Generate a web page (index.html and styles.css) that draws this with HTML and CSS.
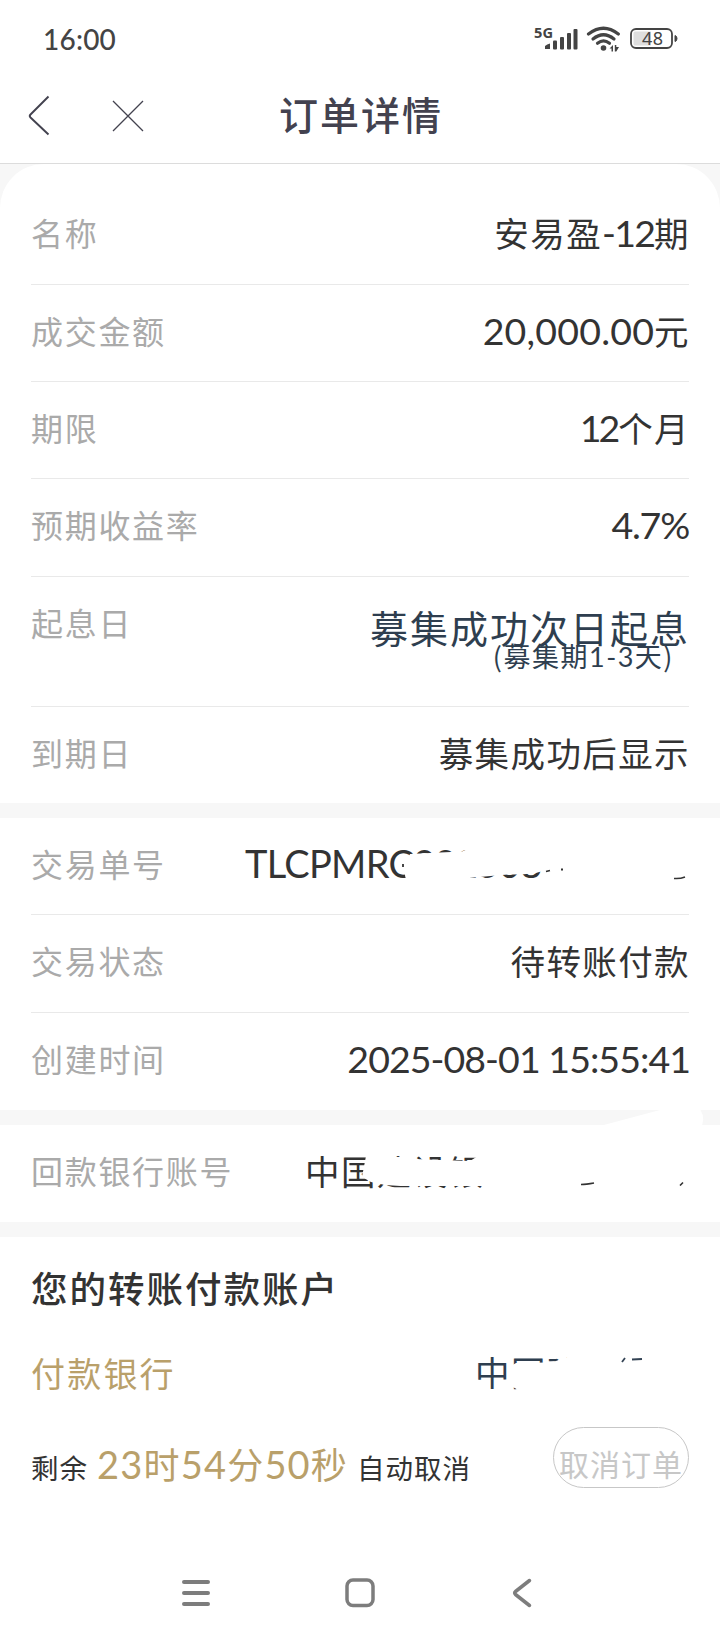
FILE: index.html
```html
<!DOCTYPE html>
<html lang="zh-CN">
<head>
<meta charset="utf-8">
<title>订单详情</title>
<link rel="stylesheet" href="styles.css">
</head>
<body>
<header class="top">
  <div class="status">
    <span class="clock">16:00</span>
    <svg class="status-icons" width="150" height="34" viewBox="530 22 150 34">
      <text class="net" x="534" y="37.5" textLength="19" lengthAdjust="spacingAndGlyphs">5G</text>
      <g fill="#444">
        <path d="M545 49V46Q547 44 550 43.500V49Z"/>
        <rect x="553" y="40.500" width="4" height="9" rx="1"/>
        <rect x="560" y="37" width="4" height="12.500" rx="1"/>
        <rect x="567" y="33" width="4" height="16.500" rx="1"/>
        <rect x="573.500" y="29" width="4" height="20.500" rx="1"/>
      </g>
      <g fill="none" stroke="#444" stroke-width="3.200" stroke-linecap="round">
        <path d="M588.500 34Q603.500 22.500 618.300 34"/>
        <path d="M593 39Q603.500 30.500 614 39"/>
        <path d="M597.500 43.300Q603.500 38.500 609.500 43.300"/>
      </g>
      <circle cx="603.500" cy="48" r="2.800" fill="#444"/>
      <path d="M609.500 48.500L613 45V51.500H611.500V48.500ZM614.800 45H616.300V47H619L616.300 51.500H614.800Z" fill="#444"/>
      <rect x="631" y="29" width="41" height="19" rx="5" fill="#fff" stroke="#444" stroke-width="1.800"/>
      <path d="M635 31.500H651V45.500H635Q633.500 45.500 633.500 44V33Q633.500 31.500 635 31.500Z" fill="#dedede"/>
      <text class="charge" x="642" y="45" textLength="21">48</text>
      <path d="M675 35.500Q677 36 677 38.500T675 41.500Z" fill="#444" stroke="#444"/>
    </svg>
  </div>
  <div class="nav">
    <svg class="nav-icons" width="150" height="50" viewBox="0 91 150 50" fill="none" stroke="#43424f">
      <path d="M48.500 96.500L30.500 114.500Q29 116 30.500 117.500L48.500 134.500" stroke-width="1.900"/>
      <path d="M113 101L143 131M143 101L113 131" stroke-width="1.300"/>
    </svg>
    <h1 class="title">订单详情</h1>
  </div>
</header>
<main class="sheet">
  <section class="group first">
    <div class="row r1"><span class="label">名称</span><span class="value">安易盈<b class="num tight">-12</b>期</span></div>
    <div class="row"><span class="label">成交金额</span><span class="value"><b class="num">20,000.00</b>元</span></div>
    <div class="row"><span class="label">期限</span><span class="value"><b class="num term">12</b>个月</span></div>
    <div class="row rate"><span class="label">预期收益率</span><span class="value"><b class="num pct">4.7%</b></span></div>
    <div class="row tall"><span class="label">起息日</span><span class="stack"><span class="start">募集成功次日起息</span><span class="note">(募集期<b class="note-num">1-3</b>天)</span></span></div>
    <div class="row last"><span class="label">到期日</span><span class="value">募集成功后显示</span></div>
  </section>
  <section class="group trade">
    <div class="row"><span class="label">交易单号</span><span class="value code">TLCPMRC202508</span>
      <svg class="cover" width="475" height="60" viewBox="235 836 475 60">
        <path d="M410 854L440 852.500L462 851.500L470 848H560V868Q545 870 536 873Q520 875 508 874.500Q490 876 474 877.500L455 879.500V883H408Q402 873 406 863Z" fill="#fff"/>
        <path d="M674 878.500Q680 879 685 877" fill="none" stroke="#333" stroke-width="1.500"/>
        <path d="M403 864V867M546 871.500L550 870.500M561 869.500H563" stroke="#333" stroke-width="1.800"/>
      </svg>
    </div>
    <div class="row"><span class="label">交易状态</span><span class="value">待转账付款</span></div>
    <div class="row"><span class="label">创建时间</span><span class="value"><b class="num date">2025-08-01 15:55:41</b></span></div>
  </section>
  <section class="group refund">
    <div class="row"><span class="label">回款银行账号</span><span class="value bank">中国建设银</span>
      <svg class="cover" width="475" height="80" viewBox="235 1106 475 80">
        <path d="M600 1126L675 1106H697Q706 1114 702 1126Z" fill="#fff"/>
        <path d="M366 1156L377 1156.500L400 1157L415 1159L440 1160L470 1161L478 1156H496V1192H445V1188L408 1186.500L385 1185L371 1182L362 1177Z" fill="#fff"/>
        <path d="M581 1184.500Q586 1184.500 594 1183M680 1185.500L683 1182.500" fill="none" stroke="#333" stroke-width="1.600"/>
      </svg>
    </div>
  </section>
  <section class="group pay">
    <h2 class="heading">您的转账付款账户</h2>
    <div class="pay-bank"><span class="gold">付款银行</span><span class="payer">中国建</span>
      <svg class="cover pay-cover" width="240" height="60" viewBox="470 1345 240 60">
        <path d="M516 1363L548 1362.500L556 1361L570 1356H610V1397H516.500V1389L511 1386V1366Z" fill="#fff"/>
        <path d="M622 1362L625 1358M632 1359.500L642 1359" stroke="#334354" stroke-width="1.800"/>
      </svg>
    </div>
    <div class="countdown">
      <span class="small">剩余</span>
      <span class="timer"><b>23</b>时<b>54</b>分<b>50</b>秒</span>
      <span class="small auto">自动取消</span>
      <button class="cancel">取消订单</button>
    </div>
  </section>
</main>
<footer class="system">
  <svg width="400" height="50" viewBox="160 1570 400 50" fill="none" stroke="#7d7d7d" stroke-width="4" stroke-linecap="round" stroke-linejoin="round">
    <path d="M184 1582H208M184 1593H208M184 1604H208"/>
    <rect x="347" y="1580" width="26" height="25.500" rx="6" stroke-width="3.500"/>
    <path d="M529.500 1580.500L515.500 1591.500Q514 1593 515.500 1594.500L529.500 1605.500" stroke-width="3.500"/>
  </svg>
</footer>
</body>
</html>
```

FILE: styles.css
```css
* { box-sizing: border-box; }
body {
  margin: 0;
  width: 720px;
  height: 1640px;
  display: flex;
  flex-direction: column;
  overflow: hidden;
  background: #fff;
  color: #333;
  font-family: "Noto Sans CJK SC", sans-serif;
}
b { font-weight: 400; }
.top { height: 164px; border-bottom: 1px solid #dcdcdc; background: #fff; }
.status { height: 78px; padding: 22px 40px 0 43px; display: flex; justify-content: space-between; align-items: flex-start; }
.clock { font: 500 28px/34px Lato, sans-serif; color: #444; letter-spacing: 0.200px; }
.net { font: 700 14px "Noto Sans", sans-serif; fill: #444; }
.charge { font: 400 18px "Noto Sans", sans-serif; fill: #444; }
.nav { height: 76px; display: grid; grid-template-columns: 279px 1fr; align-items: center; }
.title { margin: 0 0 6px; font-size: 39px; line-height: 60px; font-weight: 500; color: #43424f; letter-spacing: 2px; }
.sheet { background: #f7f7f7; display: flex; flex-direction: column; gap: 15px; }
.group { background: #fff; padding: 0 31px; }
.first { border-radius: 44px 44px 0 0; }
.row { position: relative; height: 97px; display: flex; justify-content: space-between; border-bottom: 1px solid #e9e9e9; line-height: 50px; padding-top: 20px; white-space: nowrap; }
.r1 { height: 121px; padding-top: 43px; }
.row:last-child { border-bottom: 0; }
.rate { height: 98px; }
.last { height: 96px; }
.trade .row { height: 97.330px; }
.row.tall { height: 130px; }
.label { color: #aaa; font-size: 32px; letter-spacing: 1.700px; }
.value { font-size: 34.500px; letter-spacing: 1.400px; margin-right: -1px; }
.num { font-family: Lato, sans-serif; font-size: 37.500px; letter-spacing: 0.200px; line-height: 40px; }
.tight { letter-spacing: -1.800px; }
.term { letter-spacing: -3px; margin-right: 1px; }
.pct { letter-spacing: -1.200px; margin-right: 1px; }
.date { letter-spacing: -0.950px; }
.code { font-family: Lato, sans-serif; font-size: 38px; width: 445px; letter-spacing: -0.700px; }
.cover { position: absolute; right: -21px; top: 18px; }
.stack { display: flex; flex-direction: column; align-items: flex-end; color: #2e3e4f; padding-top: 1.500px; }
.start { font-size: 38px; line-height: 56px; letter-spacing: 2px; margin-right: -1px; }
.note { font-size: 27px; line-height: 30px; letter-spacing: 1.500px; margin: -14px 15px 0 0; }
.note-num { font-family: Lato, sans-serif; }
.bank { width: 385px; }
.refund .cover { top: -19px; }
.pay { height: 324px; }
.heading { margin: 0; padding-top: 21px; font-size: 36.500px; line-height: 60px; font-weight: 500; letter-spacing: 2px; }
.pay-bank { position: relative; display: flex; justify-content: space-between; line-height: 50px; margin-top: 30px; }
.gold { color: #b9a06a; font-size: 34px; letter-spacing: 2.200px; }
.payer { color: #2e3e4f; font-size: 34.500px; letter-spacing: 1.400px; width: 214px; margin-top: -2px; }
.pay-cover { top: -3px; }
.countdown { display: flex; align-items: baseline; margin-top: 35px; line-height: 60px; white-space: nowrap; }
.small { font-size: 27.500px; letter-spacing: 1px; }
.timer { color: #b9a06a; font-size: 36px; margin-left: 9px; letter-spacing: 1.200px; }
.timer b { font-family: Lato, sans-serif; font-size: 38px; }
.auto { margin-left: 9px; }
.cancel { margin: -6px 0 0 auto; align-self: flex-start; width: 136px; height: 61px; border: 1px solid #c7c7c7; border-radius: 31px; background: #fff; color: #c7c7c7; font-family: inherit; font-size: 30px; line-height: 50px; letter-spacing: 1px; padding: 10px 0 0; white-space: nowrap; display: flex; justify-content: center; }
.system { flex: 1; padding: 8px 160px 0; background: #fff; display: flex; align-items: flex-end; }
.system svg { margin-bottom: 20px; flex: none; }
```
